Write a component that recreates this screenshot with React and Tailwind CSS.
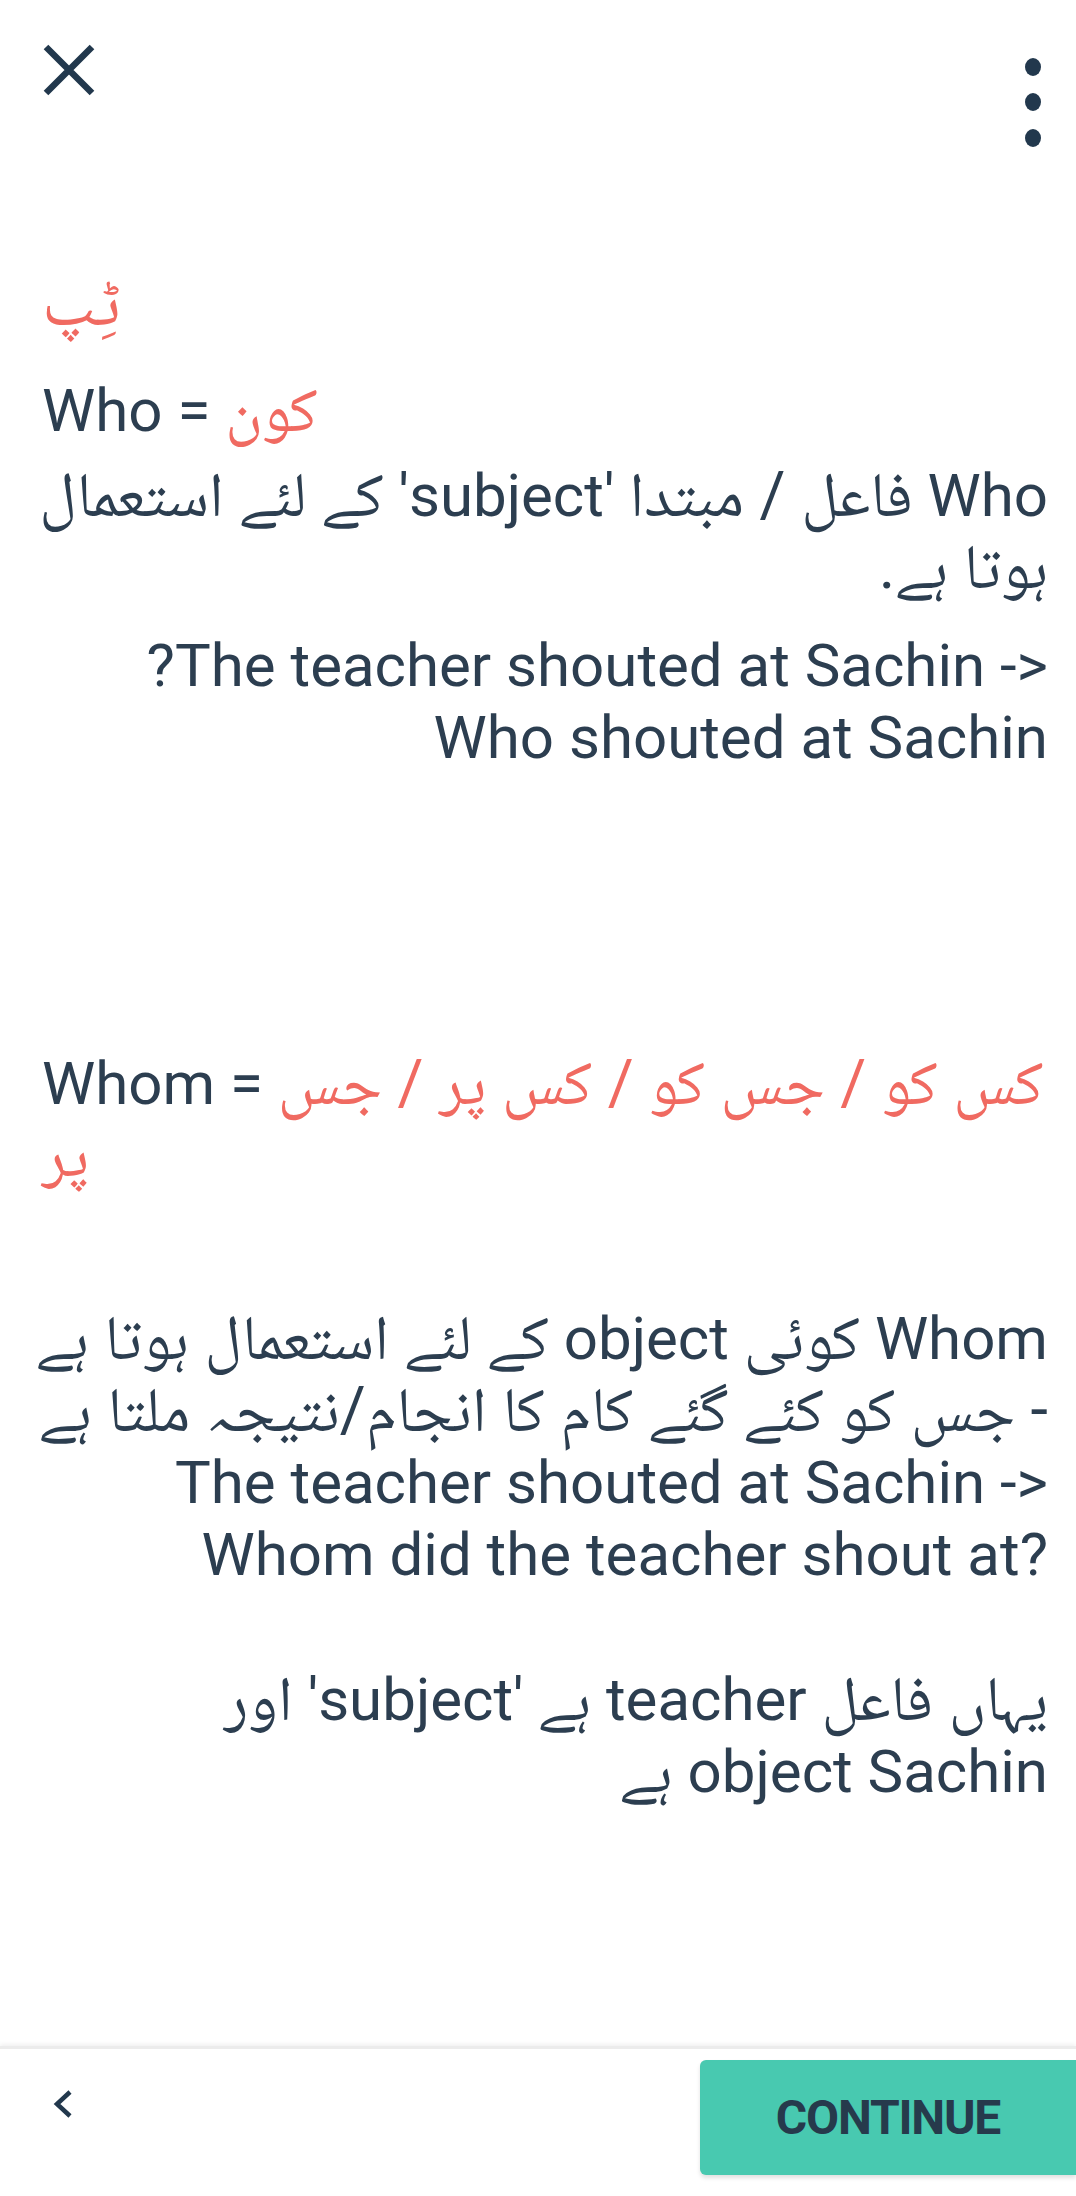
const font = {
  fontFamily: 'Roboto, "Noto Naskh Arabic", "Noto Sans Arabic", "DejaVu Sans", sans-serif',
};

function CloseIcon() {
  return (
    <svg width="54" height="52" viewBox="0 0 54 52" className="block">
      <path d="M4 3 L50 49 M50 3 L4 49" stroke="#22384d" strokeWidth="6.5" strokeLinecap="butt" />
    </svg>
  );
}

function MoreIcon() {
  return (
    <svg width="18" height="92" viewBox="0 0 18 92" className="block">
      <ellipse cx="9" cy="9" rx="8" ry="9" fill="#22384d" />
      <ellipse cx="9" cy="44" rx="8" ry="9" fill="#22384d" />
      <ellipse cx="9" cy="80" rx="8" ry="9" fill="#22384d" />
    </svg>
  );
}

function BackIcon() {
  return (
    <svg width="22" height="30" viewBox="0 0 22 30" className="block">
      <path d="M18 3 L5 15 L18 27" stroke="#22384d" strokeWidth="4.5" fill="none" />
    </svg>
  );
}

// urdu runs come out a bit small in the fallback font
function U({ children }) {
  return <span className="text-[63px] leading-none">{children}</span>;
}

function Line({ rtl, children }) {
  return (
    <div dir={rtl ? 'rtl' : 'ltr'} className="text-right whitespace-nowrap">
      {children}
    </div>
  );
}

export default function App() {
  return (
    <div style={font} className="w-full min-h-[2196px] bg-white flex flex-col text-[#2c3e50]">
      <header className="h-[262px] flex justify-between items-start pt-[44px] pl-[42px] pr-[34px]">
        <CloseIcon />
        <div className="mt-[14px]">
          <MoreIcon />
        </div>
      </header>

      <main className="pl-[42px] pr-[28px] text-[60px] leading-[72px]">
        <div className="text-[#f06a61] text-[68px] leading-[80px]">ٹِپ</div>

        <div className="mt-[33px]">
          Who = <span className="text-[#f06a61]"><U>کون</U></span>
        </div>

        <div className="mt-[13px]">
          <Line rtl>Who <U>فاعل / مبتدا</U> 'subject' <U>کے لئے استعمال</U></Line>
          <Line rtl><U>ہوتا ہے.</U></Line>
        </div>
        <div className="mt-[26px]">
          <Line>?The teacher shouted at Sachin -&gt;</Line>
          <Line>Who shouted at Sachin</Line>
        </div>

        <div className="mt-[274px]">
          <div className="whitespace-nowrap">
            Whom = <span className="text-[#f06a61]"><U>کس کو / جس کو / کس پر / جس</U></span>
          </div>
          <div className="text-[#f06a61]"><U>پر</U></div>
        </div>

        <div className="mt-[111px]">
          <Line rtl>Whom <U>کوئی</U> object <U>کے لئے استعمال ہوتا ہے</U></Line>
          <Line rtl><U>- جس کو کئے گئے کام کا انجام/نتیجہ ملتا ہے</U></Line>
          <Line>The teacher shouted at Sachin -&gt;</Line>
          <Line>Whom did the teacher shout at?</Line>
        </div>

        <div className="mt-[73px]">
          <Line rtl><U>یہاں فاعل</U> teacher <U>ہے</U> 'subject' <U>اور</U></Line>
          <Line rtl>object Sachin <U>ہے</U></Line>
        </div>
      </main>

      <footer className="mt-auto h-[150px] border-t-[3px] border-[#ececec] shadow-[0_-2px_4px_rgba(0,0,0,0.06)] flex items-start justify-between">
        <div className="pl-[52px] pt-[40px]">
          <BackIcon />
        </div>
        <button className="mt-[11px] w-[376px] h-[115px] bg-[#48c9b0] rounded-l-md shadow-[0_3px_4px_rgba(0,0,0,0.12)] flex items-center justify-center text-[#263a4c] text-[48px] font-bold tracking-tight" style={{ fontFamily: '"Liberation Sans Narrow", Roboto, sans-serif' }}>
          CONTINUE
        </button>
      </footer>
    </div>
  );
}
